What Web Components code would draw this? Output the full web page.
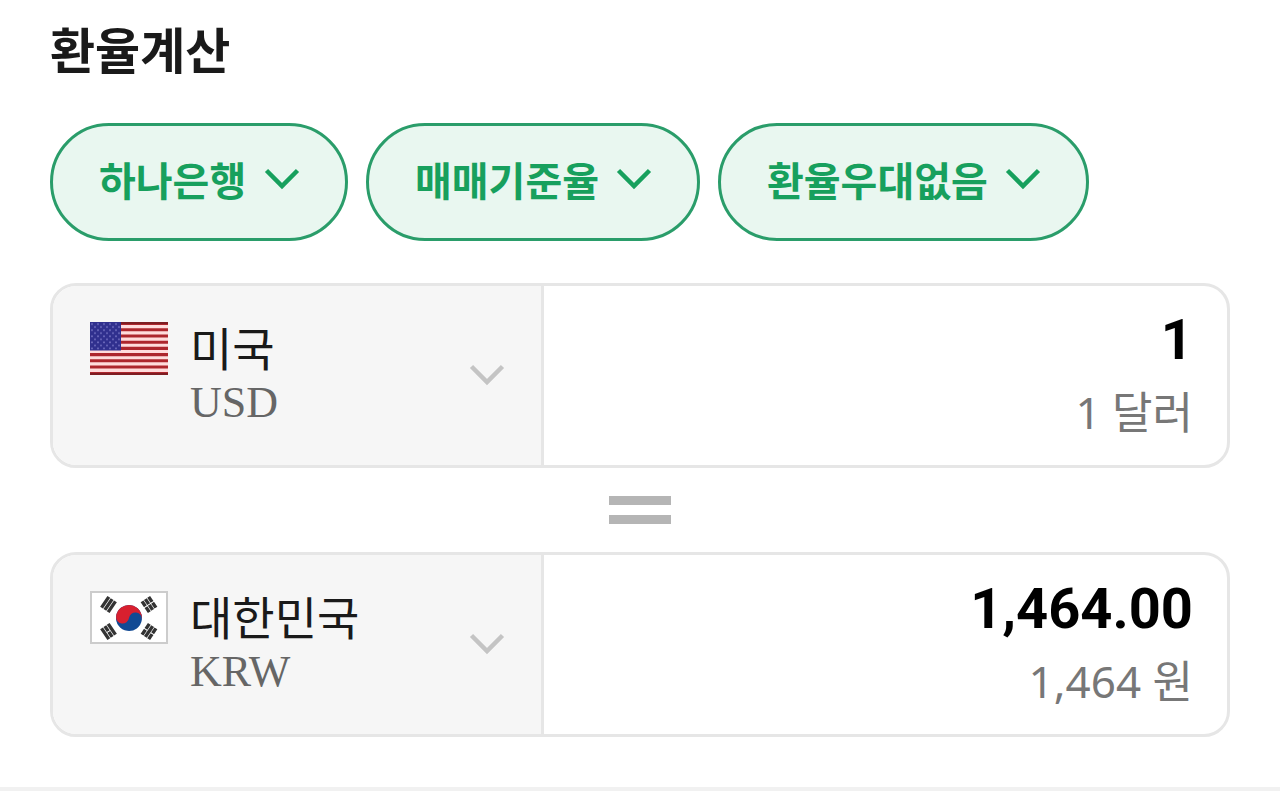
<!DOCTYPE html>
<html lang="ko">
<head>
<meta charset="utf-8">
<meta name="viewport" content="width=device-width, initial-scale=1">
<title>환율계산</title>
<style>
  body { margin: 0; background: #fff; color: #1a1a1a; font-family: "Noto Sans CJK KR", sans-serif; }
</style>
</head>
<body>
<exchange-calculator></exchange-calculator>

<template id="calculator">
  <style>
    :host { display: block; border-bottom: 4px solid #f1f1f1; padding: 20px 50px 50px; }
    h1 { margin: 0 0 47px; font-size: 49px; line-height: 56px; font-weight: 700; }
    .filters { display: flex; flex-wrap: wrap; gap: 18px; margin-bottom: 42px; }
    .equals { display: flex; flex-direction: column; align-items: center; gap: 10px; padding: 28px 0; }
    .equals i { width: 62px; height: 9px; background: #b5b5b5; }
  </style>
  <h1>환율계산</h1>
  <div class="filters">
    <filter-chip label="은행" value="하나은행"></filter-chip>
    <filter-chip label="환율 종류" value="매매기준율"></filter-chip>
    <filter-chip label="환율우대" value="환율우대없음"></filter-chip>
  </div>
  <currency-row code="USD" amount="1">
    <flag-us slot="flag"></flag-us>
    <span slot="name">미국</span>
    <span slot="reading">1 달러</span>
  </currency-row>
  <div class="equals" role="img" aria-label="같음"><i></i><i></i></div>
  <currency-row code="KRW" amount="1,464.00">
    <flag-kr slot="flag"></flag-kr>
    <span slot="name">대한민국</span>
    <span slot="reading">1,464 원</span>
  </currency-row>
</template>

<template id="chevron">
  <style>
    :host { display: block; width: 36px; height: 22px; pointer-events: none; }
    svg { display: block; width: 100%; height: 100%; }
  </style>
  <svg viewBox="0 0 36 22" fill="none" stroke="currentColor" stroke-width="4.500" aria-hidden="true"><path d="M2.500 2.500 18 18 33.500 2.500"/></svg>
</template>

<template id="chip">
  <style>
    :host { display: block; color: #17a05d; }
    label { display: grid; align-items: center; }
    select {
      grid-area: 1 / 1; appearance: none; box-sizing: border-box; height: 118px; margin: 0;
      padding: 0 98px 6px 46px; border: 3px solid #2a9d6a; border-radius: 59px;
      background: #e9f7f0; color: inherit; font: 700 40px/56px "Noto Sans CJK KR", sans-serif;
    }
    chevron-icon { grid-area: 1 / 1; justify-self: end; margin: 0 48px 6px 0; }
  </style>
  <label><select><option></option></select><chevron-icon></chevron-icon></label>
</template>

<template id="row">
  <style>
    :host { display: grid; grid-template-columns: 209fr 291fr; box-sizing: border-box; min-height: 185px;
      border: 3px solid #e6e6e6; border-radius: 26px; overflow: hidden; background: #fff; }
    button { display: flex; align-items: center; gap: 22px; margin: 0; padding: 0 36px 2px 37px; border: 0;
      border-right: 3px solid #e6e6e6; background: #f6f6f6; color: #1a1a1a; text-align: left;
      font: 400 46px/56px "Noto Sans CJK KR", sans-serif; }
    ::slotted([slot=flag]) { margin-bottom: 52px; }
    .country { flex: 1; display: flex; flex-direction: column; }
    .code { color: #666; font: 400 44px/58px "Liberation Serif", serif; }
    chevron-icon { color: #c4c4c4; }
    .money { display: flex; flex-direction: column; justify-content: center; min-width: 0; padding: 0 34px; text-align: right; }
    input { width: 100%; box-sizing: border-box; margin: 0; padding: 0; border: 0; outline: 0; background: none;
      color: #000; text-align: right; font: 700 56px/72px Roboto, sans-serif; height: 72px; }
    .reading { color: #777; font: 400 44px/72px "Noto Sans", "Noto Sans CJK KR", sans-serif; }
  </style>
  <button type="button" aria-haspopup="listbox">
    <slot name="flag"></slot>
    <span class="country"><slot name="name"></slot><span class="code"></span></span>
    <chevron-icon></chevron-icon>
  </button>
  <div class="money">
    <input type="text" inputmode="decimal">
    <div class="reading"><slot name="reading"></slot></div>
  </div>
</template>

<template id="us">
  <style>
    :host { display: block; width: 78px; height: 53px; }
    svg { display: block; width: 100%; height: 100%; }
  </style>
  <svg viewBox="0 0 78 52" preserveAspectRatio="none" aria-hidden="true">
    <defs><pattern id="stars" width="6" height="6" patternUnits="userSpaceOnUse"><circle cx="2" cy="2" r=".9" fill="#7674c4"/><circle cx="5" cy="5" r=".9" fill="#7674c4"/></pattern></defs>
    <path fill="#ffdcdc" d="M0 0h78v52H0z"/>
    <path fill="#ad262d" d="M0 0h78v3H0zM0 6.100h78v3H0zM0 12.200h78v3H0zM0 18.300h78v3H0zM0 24.400h78v3H0zM0 30.500h78v3H0zM0 36.600h78v3H0zM0 42.700h78v3H0zM0 49h78v3H0z"/>
    <path fill="#7e1d22" d="M31 0h47v2H31zM0 50h78v2H0z"/>
    <path fill="#30308e" d="M0 0h31v28H0z"/><path fill="url(#stars)" d="M0 0h31v28H0z"/>
  </svg>
</template>

<template id="kr">
  <style>
    :host { display: block; width: 78px; height: 53px; }
    svg { display: block; width: 100%; height: 100%; }
  </style>
  <svg viewBox="0 0 78 53" aria-hidden="true">
    <path fill="#fff" stroke="#ccc" stroke-width="2" d="M1 1h76v51H1z"/>
    <g transform="rotate(8 39 27)">
      <circle cx="39" cy="27" r="13" fill="#124a94"/>
      <path fill="#d8202f" d="M26 27a13 13 0 0 1 26 0a6.500 6.500 0 0 0-13 0a6.500 6.500 0 0 1-13 0z"/>
    </g>
    <g stroke="#333" stroke-width="3.400" fill="none">
      <path transform="translate(18.500 13.500) rotate(-56)" d="M-6.500-4H6.500M-6.500 0H6.500M-6.500 4H6.500"/>
      <path transform="translate(59 13.500) rotate(56)" d="M-6.500-4h6M.5-4h6M-6.500 0h6M.5 0h6M-6.500 4h6M.5 4h6"/>
      <path transform="translate(18.500 40.500) rotate(56)" d="M-6.500-4h13M-6.500 0h6M.5 0h6M-6.500 4h13"/>
      <path transform="translate(59 40.500) rotate(-56)" d="M-6.500-4h6M.5-4h6M-6.500 0h13M-6.500 4h6M.5 4h6"/>
    </g>
  </svg>
</template>

<script>
  class TemplateElement extends HTMLElement {
    constructor() {
      super();
      this.attachShadow({ mode: 'open' })
        .append(document.getElementById(this.constructor.template).content.cloneNode(true));
    }
  }
  class ChevronIcon extends TemplateElement { static template = 'chevron'; }
  class FlagUs extends TemplateElement { static template = 'us'; }
  class FlagKr extends TemplateElement { static template = 'kr'; }
  class FilterChip extends TemplateElement {
    static template = 'chip';
    connectedCallback() {
      this.shadowRoot.querySelector('option').textContent = this.getAttribute('value');
      this.shadowRoot.querySelector('select').setAttribute('aria-label', this.getAttribute('label'));
    }
  }
  class CurrencyRow extends TemplateElement {
    static template = 'row';
    connectedCallback() {
      const code = this.getAttribute('code');
      const input = this.shadowRoot.querySelector('input');
      this.shadowRoot.querySelector('.code').textContent = code;
      input.value = this.getAttribute('amount');
      input.setAttribute('aria-label', code + ' 금액');
    }
  }
  class ExchangeCalculator extends TemplateElement { static template = 'calculator'; }
  customElements.define('chevron-icon', ChevronIcon);
  customElements.define('flag-us', FlagUs);
  customElements.define('flag-kr', FlagKr);
  customElements.define('filter-chip', FilterChip);
  customElements.define('currency-row', CurrencyRow);
  customElements.define('exchange-calculator', ExchangeCalculator);
</script>
</body>
</html>
